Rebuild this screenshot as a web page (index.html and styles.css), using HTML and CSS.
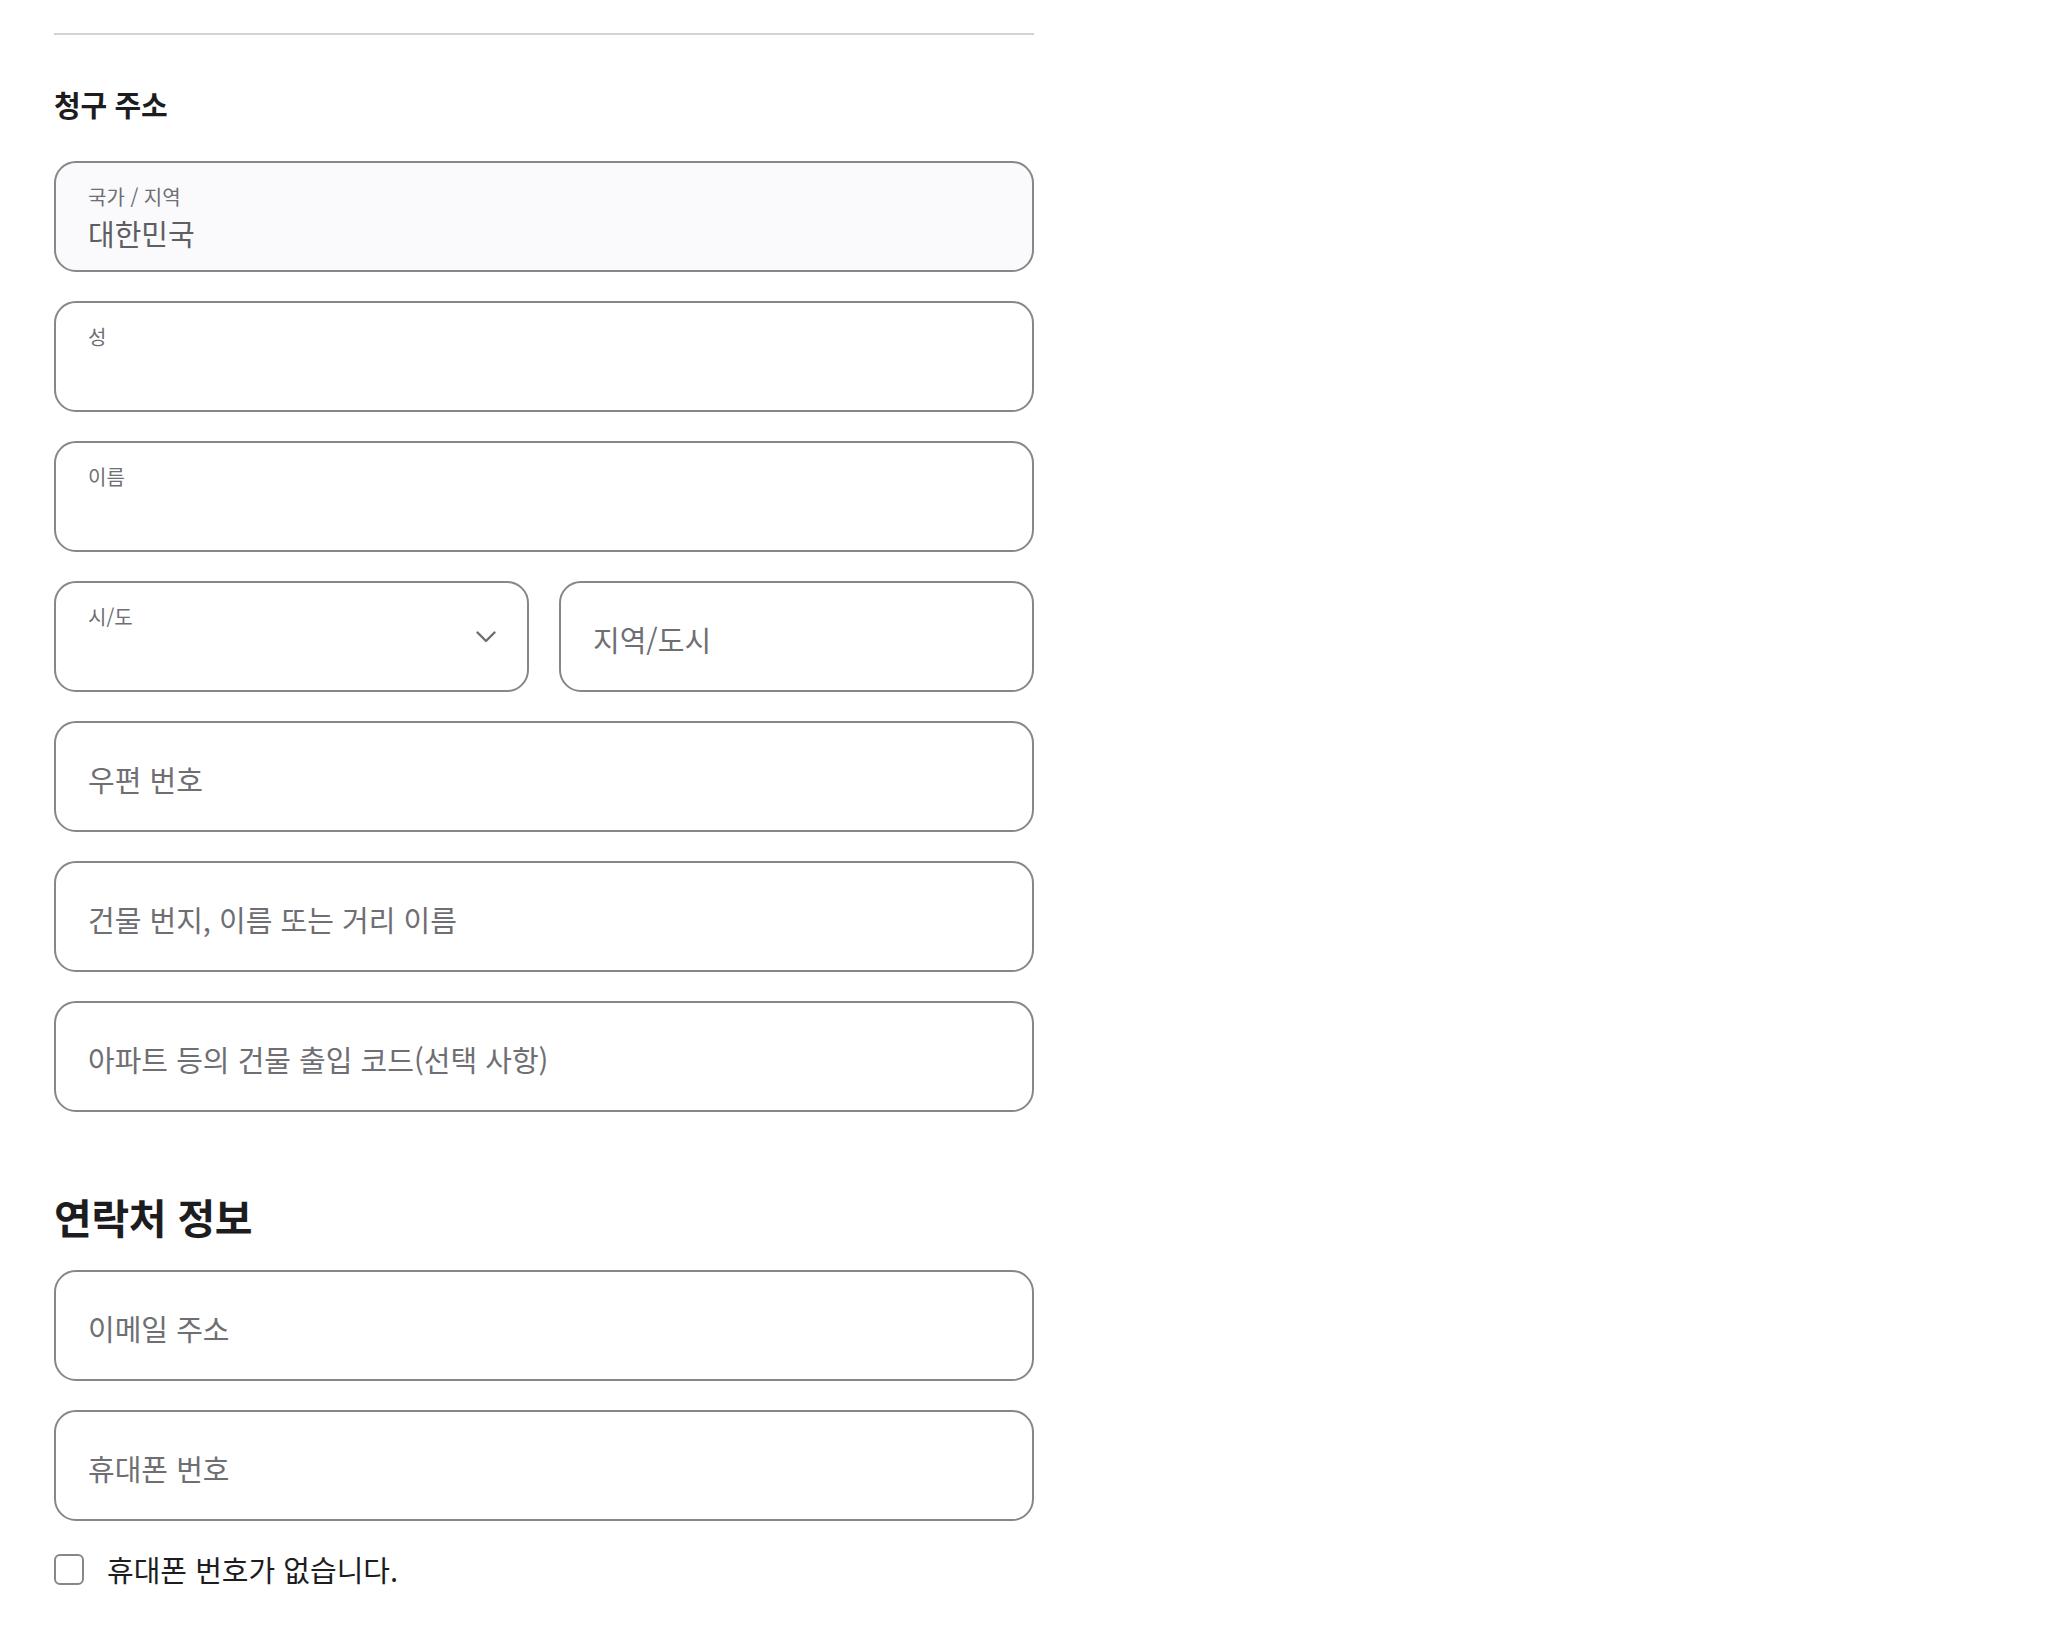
FILE: index.html
```html
<!DOCTYPE html>
<html lang="ko">
<head>
  <meta charset="UTF-8">
  <meta name="viewport" content="width=device-width, initial-scale=1.0">
  <title>청구 주소</title>
  <link rel="stylesheet" href="styles.css">
</head>
<body>
  <div class="checkout">
    <hr class="divider">

    <h2 class="section-title">청구 주소</h2>
    <div class="fields">
      <div class="field labeled disabled">
        <span class="field-label">국가 / 지역</span>
        <span class="field-value">대한민국</span>
      </div>
      <div class="field labeled">
        <span class="field-label">성</span>
      </div>
      <div class="field labeled">
        <span class="field-label">이름</span>
      </div>
      <div class="field-row">
        <div class="field labeled select">
          <span class="field-label">시/도</span>
          <svg class="chevron" width="20" height="12" viewBox="0 0 20 12">
            <polyline points="1.5,1.5 10,10 18.5,1.5" fill="none" stroke="#6e6e73" stroke-width="2.4" stroke-linecap="round" stroke-linejoin="round"/>
          </svg>
        </div>
        <div class="field">
          <span class="placeholder">지역/도시</span>
        </div>
      </div>
      <div class="field">
        <span class="placeholder">우편 번호</span>
      </div>
      <div class="field">
        <span class="placeholder">건물 번지, 이름 또는 거리 이름</span>
      </div>
      <div class="field">
        <span class="placeholder">아파트 등의 건물 출입 코드(선택 사항)</span>
      </div>
    </div>

    <h2 class="section-title large">연락처 정보</h2>
    <div class="fields">
      <div class="field">
        <span class="placeholder">이메일 주소</span>
      </div>
      <div class="field">
        <span class="placeholder">휴대폰 번호</span>
      </div>
    </div>

    <label class="check">
      <span class="check-box"></span>
      <span class="check-text">휴대폰 번호가 없습니다.</span>
    </label>
  </div>
</body>
</html>
```

FILE: styles.css
```css
:root {
  --border: #86868b;
  --muted: #6e6e73;
  --text: #1d1d1f;
  --line: #d2d2d7;
}

* {
  margin: 0;
  padding: 0;
  box-sizing: border-box;
}

body {
  background: #fff;
  color: var(--text);
  font-family: "Noto Sans CJK KR", "Noto Sans", sans-serif;
}

.checkout {
  width: 980px;
  margin-left: 54px;
  padding-top: 33px;
  padding-bottom: 60px;
}

.divider {
  border: none;
  height: 2px;
  background: var(--line);
}

.section-title {
  font-size: 29px;
  font-weight: 700;
  line-height: 36px;
  margin-top: 51px;
  margin-bottom: 39px;
  letter-spacing: -0.3px;
}

.section-title.large {
  font-size: 41px;
  line-height: 48px;
  margin-top: 80px;
  margin-bottom: 30px;
}

.fields {
  display: flex;
  flex-direction: column;
  gap: 29px;
}

.field-row {
  display: grid;
  grid-template-columns: 1fr 1fr;
  gap: 30px;
}

.field {
  position: relative;
  height: 111px;
  border: 2px solid var(--border);
  border-radius: 22px;
  padding: 4px 32px 0;
  display: flex;
  flex-direction: column;
  justify-content: center;
  background: #fff;
}

.field.labeled {
  justify-content: flex-start;
  padding-top: 22px;
}

.field.disabled {
  background: #fafafc;
}

.field-label {
  font-size: 20px;
  line-height: 24px;
  color: var(--muted);
}

.field-value {
  margin-top: 7px;
  font-size: 29px;
  line-height: 34px;
  color: #5e5e63;
}

.placeholder {
  font-size: 29px;
  line-height: 34px;
  color: var(--muted);
}

.chevron {
  position: absolute;
  right: 31px;
  top: 48px;
}

.check {
  display: flex;
  align-items: center;
  gap: 23px;
  margin-top: 31px;
}

.check-box {
  width: 30px;
  height: 31px;
  border: 2px solid var(--border);
  border-radius: 6px;
  flex-shrink: 0;
}

.check-text {
  font-size: 29px;
  line-height: 34px;
  color: var(--text);
}
```
